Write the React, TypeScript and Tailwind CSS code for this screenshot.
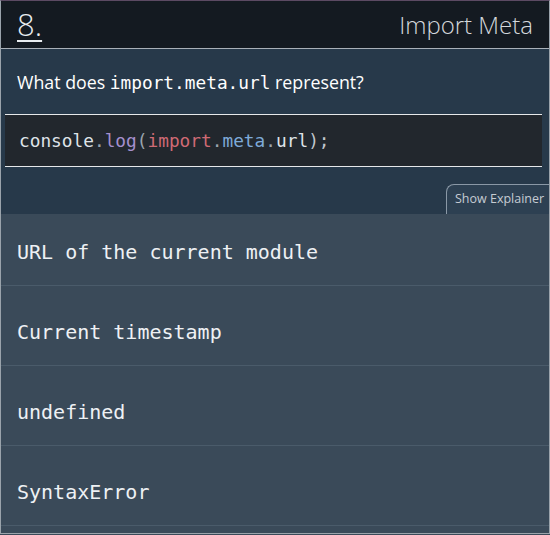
import React from "react";

const sans = { fontFamily: '"Open Sans", Lato, sans-serif' };
const mono = { fontFamily: '"DejaVu Sans Mono", monospace' };

export default function App() {
  const options = ["URL of the current module", "Current timestamp", "undefined", "SyntaxError"];
  return (
    <div className="w-[550px] h-[535px] overflow-hidden bg-[#3a4a59]">
      <div className="w-[550px] h-[534px] flex flex-col border-x border-b border-[#9aa3ab] border-t border-t-[#5c4a63] bg-[#3a4a59]">
        <div className="h-[48px] shrink-0 bg-[#141a21] flex items-center justify-between pl-[16px] pr-[16px] border-b border-[#a9b0b8]" style={sans}>
          <span className="text-[31px] font-light text-[#e8ecef] underline underline-offset-[4px] decoration-[2px] leading-none">8.</span>
          <span className="text-[24px] font-light text-[#d4d8dc] leading-none">Import Meta</span>
        </div>
        <div className="bg-[#27394a] shrink-0 flex flex-col">
          <div className="pl-[16px] pt-[20px] h-[65px] text-[17.8px] text-white whitespace-nowrap" style={sans}>
            What does <span style={mono} className="text-[17.8px]">import.meta.url</span> represent?
          </div>
          <div className="mx-[4px] w-[537px] h-[53px] bg-[#22272d] border-y border-[#e6e8ea] flex items-center pl-[14px] pt-[2px] text-[17.8px] text-[#dfe3e8]" style={mono}>
            <span>console</span><span className="text-[#9aa4ae]">.</span><span className="text-[#a58fcd]">log</span><span className="text-[#9aa4ae]">(</span><span className="text-[#cf6a74]">import</span><span className="text-[#9aa4ae]">.</span><span className="text-[#7eaad8]">meta</span><span className="text-[#9aa4ae]">.</span><span>url</span><span className="text-[#c0c6cc]">);</span>
          </div>
          <div className="flex justify-end pt-[17px]">
            <div className="h-[30px] w-[103px] border-l border-t border-[#8a98a6] rounded-tl-[8px] bg-[#2d4052] text-[12.5px] text-[#c6ccd2] flex items-center pl-[8px] whitespace-nowrap" style={sans}>
              Show Explainer
            </div>
          </div>
        </div>
        <div className="flex flex-col">
          {options.map((o, i) => (
            <div
              key={o}
              className={`border-b border-[#4a5b6a] flex items-center pl-[16px] text-[20px] text-[#eef1f4] ${i === 0 ? "h-[72px] pt-[4px]" : "h-[80px] pt-[12px]"}`}
              style={mono}
            >
              {o}
            </div>
          ))}
        </div>
      </div>
    </div>
  );
}
